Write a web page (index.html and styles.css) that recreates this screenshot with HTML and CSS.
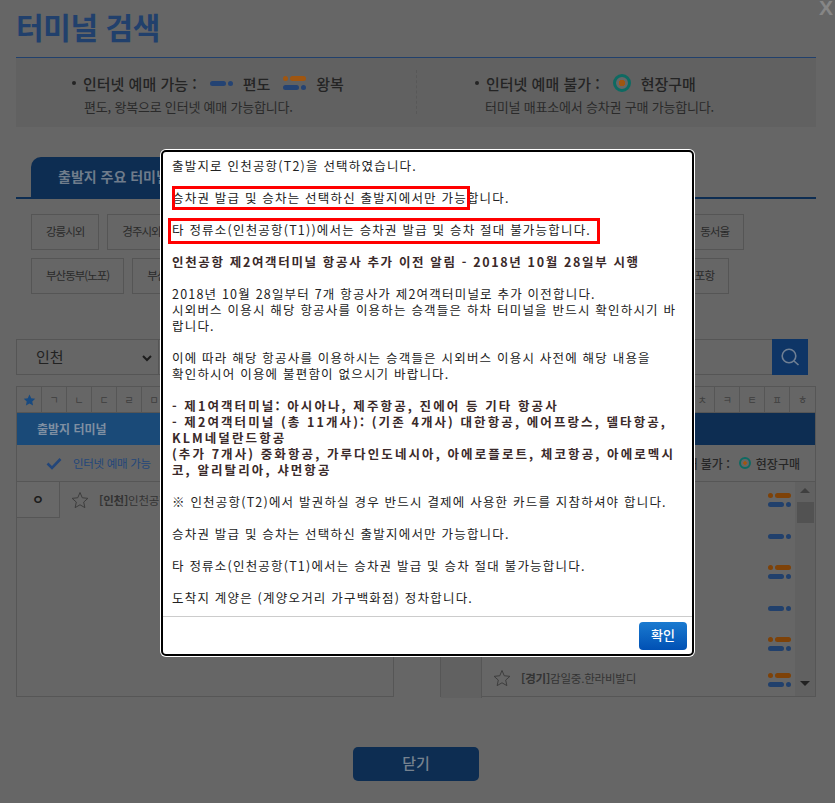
FILE: index.html
```html
<!DOCTYPE html>
<html lang="ko">
<head>
<meta charset="utf-8">
<title>터미널 검색</title>
<link rel="stylesheet" href="styles.css">
</head>
<body>
<div class="page">
  <span class="close-x">X</span>
  <h1 class="title">터미널 검색</h1>
  <section class="info">
    <div class="info-col">
      <div class="info-head"><i class="bullet"></i><span class="lab">인터넷 예매 가능 :</span>
        <span class="route"><span class="r-line"><b class="pill blue"></b><b class="dot blue"></b></span></span><span class="kind">편도</span>
        <span class="route"><span class="r-line"><b class="dot orange"></b><b class="pill orange"></b></span><span class="r-line"><b class="pill blue"></b><b class="dot blue"></b></span></span><span class="kind">왕복</span>
      </div>
      <p class="info-sub">편도, 왕복으로 인터넷 예매 가능합니다.</p>
    </div>
    <div class="info-col second">
      <div class="info-head"><i class="bullet"></i><span class="lab">인터넷 예매 불가 :</span>
        <span class="target big"></span><span class="kind">현장구매</span>
      </div>
      <p class="info-sub">터미널 매표소에서 승차권 구매 가능합니다.</p>
    </div>
  </section>

  <div class="tabs"><div class="tab">출발지 주요 터미널</div></div>
  <div class="quick">
    <div class="quick-row r1">
      <a class="qbtn">강릉시외</a><a class="qbtn">경주시외</a><a class="qbtn grow">광주(유·스퀘어)</a><a class="qbtn">동서울</a>
    </div>
    <div class="quick-row r2">
      <a class="qbtn">부산동부(노포)</a><a class="qbtn">부산사상</a><a class="qbtn grow">서울경부</a><a class="qbtn">포항</a>
    </div>
  </div>

  <div class="search">
    <div class="select">인천<svg class="chev" width="10" height="7" viewBox="0 0 10 7"><path d="M1 1l4 4 4-4" fill="none" stroke="#1c1c1c" stroke-width="2"/></svg></div>
    <div class="input"></div>
    <div class="sbtn"><svg width="20" height="20" viewBox="0 0 20 20"><circle cx="9" cy="9" r="6.8" fill="none" stroke="#6f7f93" stroke-width="1.6"/><path d="M14 14l4.5 4" stroke="#6f7f93" stroke-width="1.6"/></svg></div>
  </div>

  <div class="panels">
    <section class="panel">
      <div class="alpha"><span class="on"><svg width="13" height="12" viewBox="0 0 24 23"><path d="M12 1l3.3 7.2 7.7.9-5.7 5.3 1.5 7.6L12 18.2 5.2 22l1.5-7.6L1 9.100l7.700-.9z" fill="#184a80"/></svg></span><span>ㄱ</span><span>ㄴ</span><span>ㄷ</span><span>ㄹ</span><span>ㅁ</span><span>ㅂ</span><span>ㅅ</span><span>ㅇ</span><span>ㅈ</span><span>ㅊ</span><span>ㅋ</span><span>ㅌ</span><span>ㅍ</span><span>ㅎ</span></div>
      <div class="phead active">출발지 터미널</div>
      <div class="legend left">
        <svg class="check" width="16" height="13" viewBox="0 0 16 13"><path d="M1.500 6.500l4.500 4.500 8.500-9" fill="none" stroke="#23467a" stroke-width="2.600"/></svg>
        <span>인터넷 예매 가능</span>
      </div>
      <div class="row">
        <div class="initial">ㅇ</div>
        <svg class="star" width="18" height="18" viewBox="0 0 24 24"><path d="M12 2l3 7 7.500.8-5.600 5 1.600 7.400L12 18.400 5.500 22.200l1.600-7.400-5.600-5L9 9z" fill="none" stroke="#3c3c3c" stroke-width="1.300"/></svg>
        <span class="name"><b>[인천]</b>인천공항T2</span>
      </div>
    </section>

    <section class="panel">
      <div class="alpha"><span class="on"></span><span>ㄱ</span><span>ㄴ</span><span>ㄷ</span><span>ㄹ</span><span>ㅁ</span><span>ㅂ</span><span>ㅅ</span><span>ㅇ</span><span>ㅈ</span><span>ㅊ</span><span>ㅋ</span><span>ㅌ</span><span>ㅍ</span><span>ㅎ</span></div>
      <div class="phead">도착지 터미널</div>
      <div class="legend right">
        <span class="lab-s">인터넷 예매 불가 :</span><span class="target"></span><span class="kind-s">현장구매</span>
      </div>
      <div class="listwrap">
        <div class="list">
          <div class="row r"><div class="initial"></div><span class="rt"><span class="r-line"><b class="dot orange"></b><b class="pill orange"></b></span><span class="r-line"><b class="pill blue"></b><b class="dot blue"></b></span></span></div>
          <div class="row r"><div class="initial"></div><span class="rt"><span class="r-line"><b class="pill blue"></b><b class="dot blue"></b></span></span></div>
          <div class="row r"><div class="initial"></div><span class="rt"><span class="r-line"><b class="dot orange"></b><b class="pill orange"></b></span><span class="r-line"><b class="pill blue"></b><b class="dot blue"></b></span></span></div>
          <div class="row r"><div class="initial"></div><span class="rt"><span class="r-line"><b class="pill blue"></b><b class="dot blue"></b></span></span></div>
          <div class="row r"><div class="initial"></div><span class="rt"><span class="r-line"><b class="dot orange"></b><b class="pill orange"></b></span><span class="r-line"><b class="pill blue"></b><b class="dot blue"></b></span></span></div>
          <div class="row r last"><div class="initial"></div>
            <svg class="star" width="18" height="18" viewBox="0 0 24 24"><path d="M12 2l3 7 7.500.8-5.600 5 1.600 7.400L12 18.400 5.500 22.200l1.600-7.400-5.600-5L9 9z" fill="none" stroke="#3c3c3c" stroke-width="1.300"/></svg>
            <span class="name"><b>[경기]</b>감일중.한라비발디</span>
            <span class="rt"><span class="r-line"><b class="dot orange"></b><b class="pill orange"></b></span><span class="r-line"><b class="pill blue"></b><b class="dot blue"></b></span></span></div>
        </div>
        <div class="scroll"><i class="up"></i><i class="thumb"></i><i class="down"></i></div>
      </div>
    </section>
  </div>

  <div class="foot"><a class="closebtn">닫기</a></div>
</div>

<div class="modal">
  <div class="mbody">
    <p>출발지로 인천공항(T2)을 선택하였습니다.</p>
    <p>승차권 발급 및 승차는 선택하신 출발지에서만 가능합니다.</p>
    <p>타 정류소(인천공항(T1))에서는 승차권 발급 및 승차 절대 불가능합니다.</p>
    <p class="strong head">인천공항 제2여객터미널 항공사 추가 이전 알림 - 2018년 10월 28일부 시행</p>
    <p>2018년 10월 28일부터 7개 항공사가 제2여객터미널로 추가 이전합니다.<br>시외버스 이용시 해당 항공사를 이용하는 승객들은 하차 터미널을 반드시 확인하시기 바<br>랍니다.</p>
    <p>이에 따라 해당 항공사를 이용하시는 승객들은 시외버스 이용시 사전에 해당 내용을<br>확인하시어 이용에 불편함이 없으시기 바랍니다.</p>
    <p class="strong">- 제1여객터미널: 아시아나, 제주항공, 진에어 등 기타 항공사<br>- 제2여객터미널 (총 11개사): (기존 4개사) 대한항공, 에어프랑스, 델타항공,<br>KLM네덜란드항공<br>(추가 7개사) 중화항공, 가루다인도네시아, 아에로플로트, 체코항공, 아에로멕시<br>코, 알리탈리아, 샤먼항공</p>
    <p>※ 인천공항(T2)에서 발권하실 경우 반드시 결제에 사용한 카드를 지참하셔야 합니다.</p>
    <p>승차권 발급 및 승차는 선택하신 출발지에서만 가능합니다.</p>
    <p>타 정류소(인천공항(T1)에서는 승차권 발급 및 승차 절대 불가능합니다.</p>
    <p>도착지 계양은 (계양오거리 가구백화점) 정차합니다.</p>
    <span class="mark m1"></span>
    <span class="mark m2"></span>
  </div>
  <div class="mfoot"><a class="okbtn">확인</a></div>
</div>
</body>
</html>
```
FILE: styles.css
```css
* { box-sizing: border-box; }
html, body { margin: 0; height: 803px; overflow: hidden; }
body {
  background: #666;
  color: #2e2e2e;
  font-family: "Noto Sans CJK KR", "Noto Sans", sans-serif;
  font-size: 13px;
}
a { display: block; }
.page { position: relative; width: 835px; padding: 0 19px 0 16px; }
.close-x {
  position: absolute; right: 2px; top: 0;
  font: 700 21px/16px "Liberation Sans", sans-serif;
  color: #868686;
}
.title {
  margin: 0; height: 58px;
  border-bottom: 1px solid #21406c;
  font-size: 30px; line-height: 52px; font-weight: 700;
  letter-spacing: -.4px; color: #21406c;
}
.info { display: flex; height: 69px; background: #616161; }
.info-col { width: 400px; padding: 12px 0 0 54px; }
.info-col.second { padding-left: 57px; }
.info-col + .info-col { position: relative; }
.info-col + .info-col::before {
  content: ""; position: absolute; left: 0; top: 12px; height: 44px;
  border-left: 1px dashed #585858;
}
.info-head { display: flex; align-items: center; height: 26px; font-size: 15px; font-weight: 500; color: #242424; }
.bullet { width: 4px; height: 4px; border-radius: 50%; background: #242424; margin-right: 7px; margin-left: 2px; }
.lab { margin-right: 13px; }
.kind { margin-left: 10px; margin-right: 13px; }
.route { display: inline-flex; flex-direction: column; gap: 4px; width: 23px; }
.route .blue { background: #244373; }
.route .orange { background: #a05610; }
.r-line { display: flex; align-items: center; justify-content: space-between; height: 5px; }
.pill { display: block; width: 16px; height: 5px; border-radius: 3px; }
.dot { display: block; width: 5px; height: 5px; border-radius: 50%; }
.blue { background: #21406c; }
.orange { background: #7e4208; }
.target {
  display: inline-block; width: 12px; height: 12px; border-radius: 50%;
  border: 2.500px solid #0e6a62; background: radial-gradient(circle, #a05610 1.500px, #666 2px);
}
.target.big { width: 18px; height: 18px; border-width: 3.500px; background: radial-gradient(circle, #a05610 3px, #666 3.500px); }
.info-sub { margin: 2px 0 0 14px; font-size: 13px; line-height: 18px; color: #2a2a2a; letter-spacing: -.2px; }
.second .info-sub { margin-left: 12px; }

.tabs { margin-top: 30px; height: 42px; border-bottom: 2px solid #0d2d52; padding-left: 15px; }
.tab {
  width: 180px; height: 40px; padding-left: 27px;
  background: #0d2d52; border-radius: 10px 0 0 0;
  color: #6f7c8b; font-size: 14px; font-weight: 700; line-height: 39px;
}
.quick { padding: 15px 0 0 15px; display: flex; flex-direction: column; gap: 8px; }
.quick-row { display: flex; gap: 8px; }
.r1 { width: 713px; }
.r2 { width: 698px; }
.qbtn {
  height: 36px; padding: 0 14px; border: 1px solid #555;
  line-height: 33px; font-size: 11.500px; color: #2a2a2a; letter-spacing: -1px; white-space: nowrap;
}
.qbtn.grow { flex: 1; }

.search { display: flex; margin-top: 45px; width: 792px; height: 36px; }
.select { position: relative; width: 142px; border: 1px solid #555; border-right: 0; padding-left: 19px; font-size: 15px; line-height: 33px; color: #222; }
.chev { position: absolute; left: 125px; top: 15px; }
.input { flex: 1; border: 1px solid #555; border-right: 0; }
.sbtn { width: 36px; background: #0e3566; display: flex; align-items: center; justify-content: center; }

.panels { display: flex; justify-content: space-between; margin-top: 11px; height: 311px; }
.panel { display: flex; flex-direction: column; border: 1px solid #565656; border-top: 0; }
.panel:first-child { width: 378px; }
.panel:last-child { width: 376px; }
.alpha { display: flex; height: 27px; border-top: 1px solid #565656; border-bottom: 1px solid #565656; }
.alpha span {
  width: 25px; display: flex; align-items: center; justify-content: center;
  border-right: 1px solid #565656; color: #3e3e3e; font-size: 10px;
}
.alpha span:last-child { border-right: 0; }
.phead { height: 32px; background: #0d2d52; color: #6f7c8b; font-size: 12px; font-weight: 700; line-height: 32px; padding-left: 20px; }
.phead.active { background: #1a4a78; color: #7f8fa2; }
.legend { display: flex; align-items: center; height: 37px; border-bottom: 1px solid #565656; }
.legend.left { padding-left: 29px; gap: 11px; color: #23467a; font-size: 11.500px; letter-spacing: -.3px; }
.legend.right { justify-content: flex-end; padding-right: 15px; color: #262626; font-size: 12px; font-weight: 500; }
.lab-s { margin-right: 9px; }
.kind-s { margin-left: 5px; }
.row { display: flex; align-items: center; height: 36px; }
.initial { width: 43px; height: 36px; border: 1px solid #565656; border-width: 0 1px 1px 0; background: #686868; text-align: center; line-height: 33px; font-size: 13px; font-weight: 700; color: #1c1c1c; }
.star { margin-left: 11px; flex: none; }
.name { margin-left: 10px; font-size: 11.500px; color: #333; letter-spacing: -.2px; white-space: nowrap; }
.name b { font-weight: 700; }
.last .star, .last .name { margin-top: -4px; }
.listwrap { display: flex; flex: 1; min-height: 0; }
.list { flex: 1; min-width: 0; }
.list .initial { width: 41px; background: #616161; border-width: 0 1px 0 0; }
.row.r { position: relative; }
.rt { position: absolute; right: 4px; top: 0; bottom: 0; width: 23px; display: flex; flex-direction: column; justify-content: center; gap: 4px; }
.scroll { position: relative; width: 20px; background: #616161; }
.scroll i { position: absolute; display: block; }
.up { left: 5px; top: 6px; border: 5px solid transparent; border-top: 0; border-bottom: 5px solid #3f3f3f; }
.thumb { left: 2px; top: 20px; width: 17px; height: 21px; background: #525252; }
.down { left: 5px; bottom: 10px; border: 5px solid transparent; border-bottom: 0; border-top: 5px solid #222; }

.foot { display: flex; margin-top: 50px; padding-left: 337px; }
.closebtn {
  width: 126px; height: 34px; border-radius: 5px;
  background: #0d2d52; color: #76828f; text-align: center;
  font-size: 15px; font-weight: 500; line-height: 32px;
}

.modal {
  position: absolute; left: 161px; top: 150px; width: 533px; height: 506px;
  background: #fff; border: 2px solid #000; border-radius: 5px;
  box-shadow: 0 0 0 1px #fff;
  display: flex; flex-direction: column;
  color: #222;
}
.mbody { position: relative; height: 465px; border-bottom: 1px solid #ccc; padding: 6px 0 0 9px; font-size: 12.500px; line-height: 16px; letter-spacing: 1.2px; white-space: nowrap; }
.mbody p { margin: 0 0 16px; }
.strong { font-weight: 700; color: #3a2a2a; letter-spacing: 2.1px; }
.strong.head { letter-spacing: 1.65px; }
.mark { position: absolute; border: 3px solid #f00; }
.m1 { left: 9px; top: 34px; width: 298px; height: 24px; }
.m2 { left: 5px; top: 66px; width: 432px; height: 26px; }
.mfoot { flex: 1; display: flex; justify-content: flex-end; padding: 5px 5px 0 0; }
.okbtn {
  width: 48px; height: 28px; border-radius: 4px;
  background: linear-gradient(#1a7ad0, #0050b4);
  color: #fff; text-align: center; font-size: 13px; line-height: 26px; font-weight: 500;
}
```
